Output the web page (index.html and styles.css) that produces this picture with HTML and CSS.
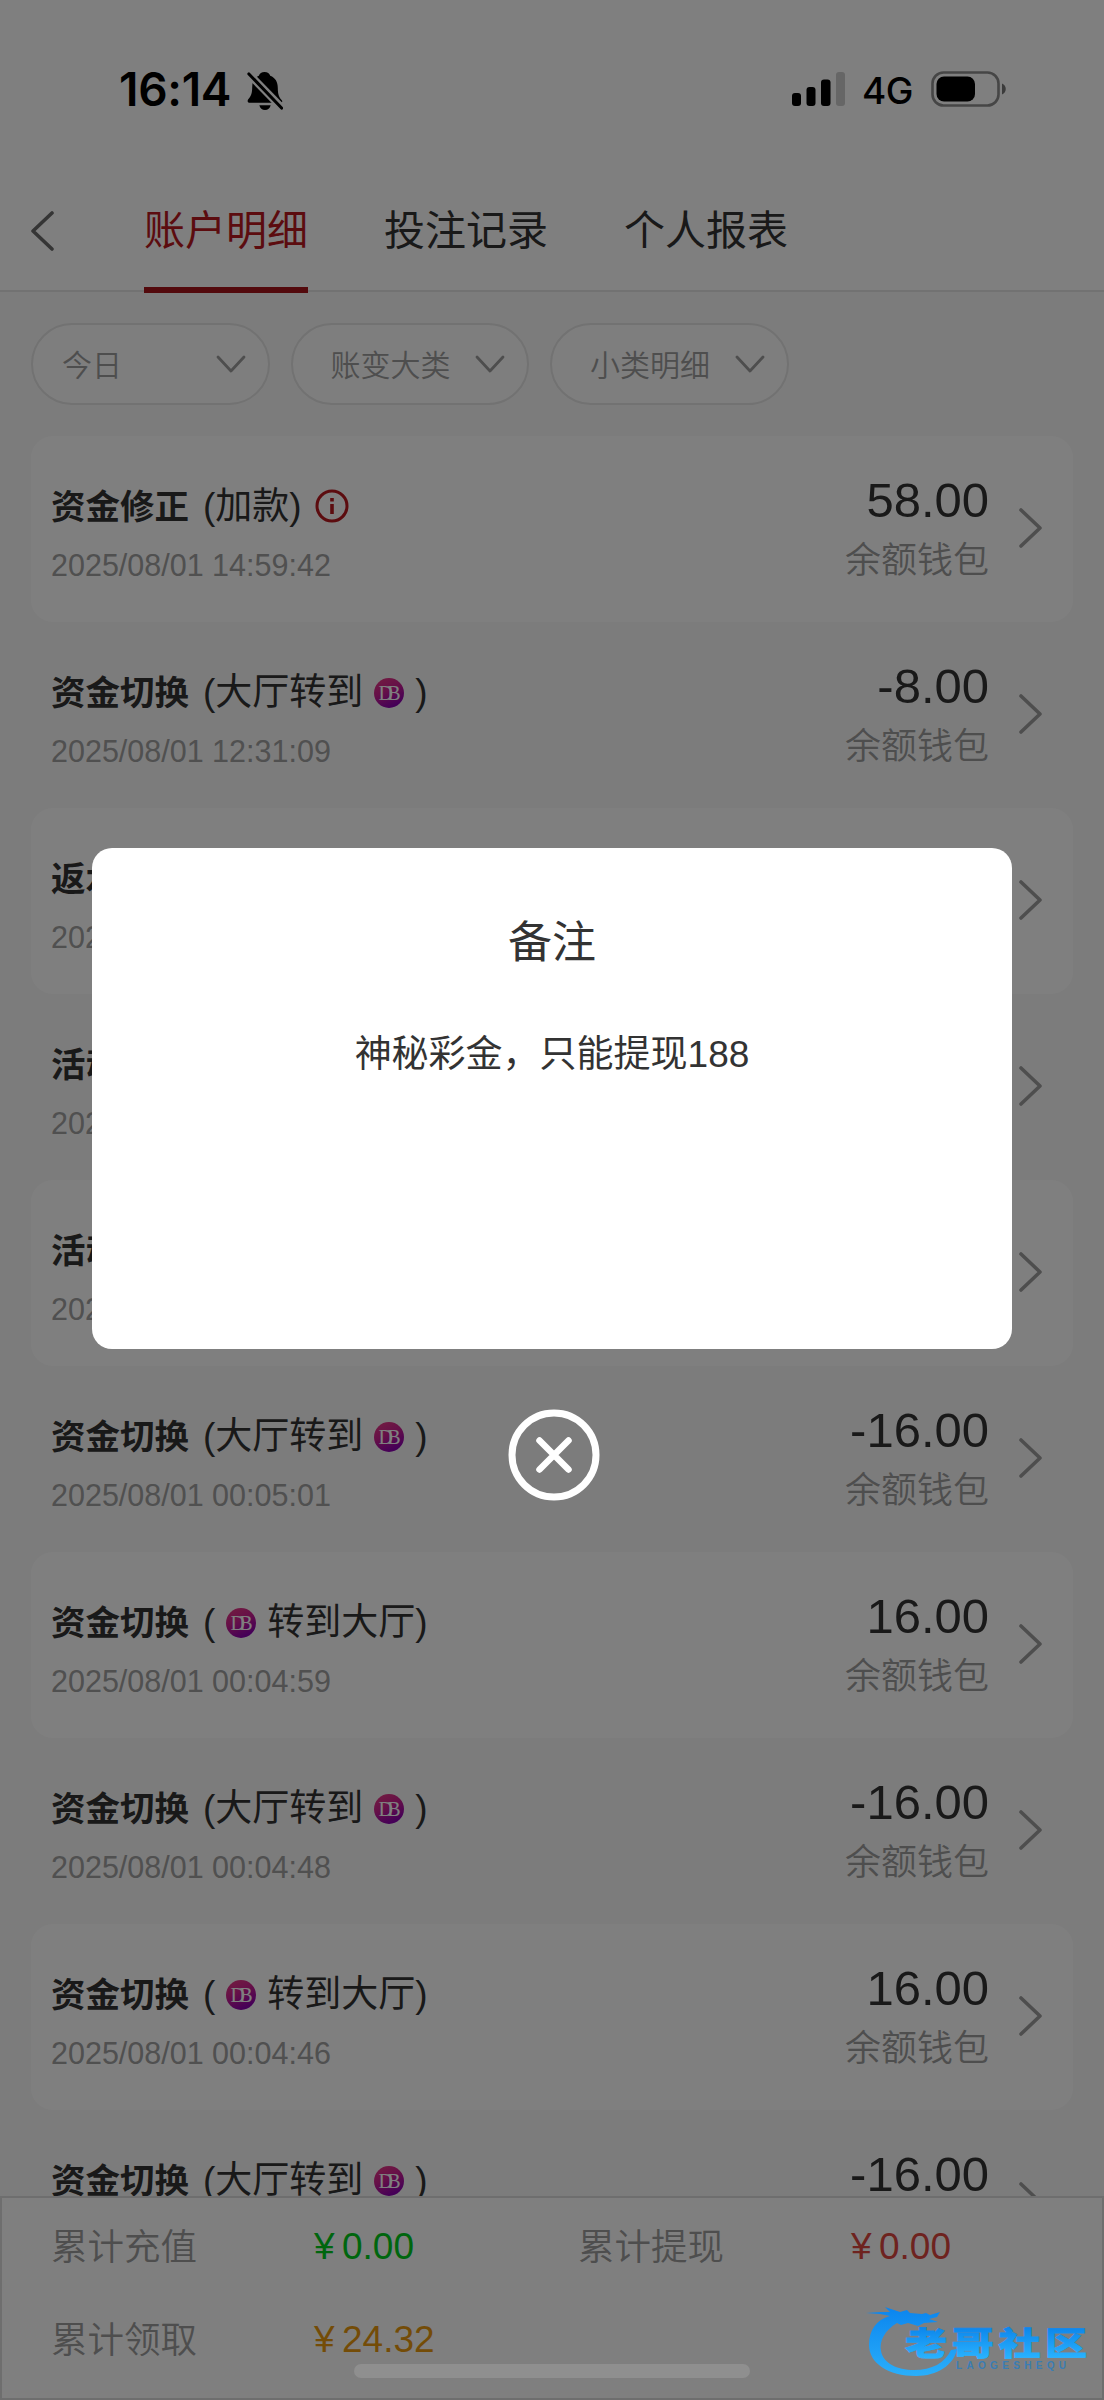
FILE: index.html
```html
<!DOCTYPE html>
<html lang="zh-CN">
<head>
<meta charset="utf-8">
<title>账户明细</title>
<link rel="stylesheet" href="styles.css">
</head>
<body>
<svg class="defs" width="0" height="0" aria-hidden="true">
  <defs>
    <linearGradient id="db-fill" x1="0" y1="0" x2="0.5" y2="1">
      <stop offset="0" stop-color="#e83c80"/><stop offset="0.5" stop-color="#cc2090"/><stop offset="1" stop-color="#8a00b0"/>
    </linearGradient>
    <symbol id="db" viewBox="0 0 30 30">
      <circle cx="15" cy="15" r="15" fill="url(#db-fill)"/>
      <text x="4.5" y="22" font-family="Liberation Serif, serif" font-size="20" fill="#fff" textLength="22" lengthAdjust="spacing">DB</text>
    </symbol>
    <symbol id="next" viewBox="0 0 24 40"><path d="M2 2 21 20 2 38" fill="none" stroke="#9c9c9c" stroke-width="3.6" stroke-linecap="round" stroke-linejoin="round"/></symbol>
    <symbol id="down" viewBox="0 0 30 18"><path d="M2 2 15 16 28 2" fill="none" stroke="#9c9c9c" stroke-width="2.8" stroke-linecap="round" stroke-linejoin="round"/></symbol>
  </defs>
</svg>
<div class="screen">
  <header class="status">
    <span class="clock">16:14</span>
    <svg class="bell" width="36" height="40" viewBox="0 0 38 42">
      <path d="M18.500 1c3.200 0 5.300 1.500 6 4 5.500 2.200 8 6.500 8 12.500 0 7.500 1.500 10 4 13 1.500 2 .5 3-1.500 3H3c-2.500 0-3-2-1.500-4 2.800-3 4-6.500 4-12.500C5.500 11 8 7 12.500 5c.7-2.500 3-4 6-4z"/>
      <path d="M13 36h12c-.7 3.200-3 5-6 5s-5.300-1.800-6-5z"/>
      <path d="M2 3 37 39" stroke="#fff" stroke-width="8"/>
      <path d="M2 3 36.500 39" stroke="#000" stroke-width="3.200" stroke-linecap="round"/>
    </svg>
    <svg class="signal" width="54" height="34" viewBox="0 0 54 34">
      <rect x="0" y="21" width="9" height="13" rx="3"/><rect x="14.500" y="15" width="9" height="19" rx="3"/>
      <rect x="29" y="7.500" width="9.500" height="26.500" rx="3"/><rect x="44" y="0" width="9" height="34" rx="3" fill="#cccccc"/>
    </svg>
    <span class="net">4G</span>
    <svg class="battery" width="76" height="36" viewBox="0 0 76 36">
      <rect x="1.500" y="1.500" width="66" height="33" rx="11" fill="none" stroke="#8d8d8d" stroke-width="2.600"/>
      <rect x="5.500" y="5.500" width="38.500" height="25" rx="7.500"/>
      <path d="M71 12.500c5 2 5 9 0 11z" fill="#777"/>
    </svg>
  </header>

  <nav class="tabs">
    <svg class="back" width="24" height="40" viewBox="0 0 24 40"><path d="M22 2 3 20 22 38" fill="none" stroke="#6a6a6a" stroke-width="3.600" stroke-linecap="round" stroke-linejoin="round"/></svg>
    <span class="tab tab-active">账户明细</span>
    <span class="tab">投注记录</span>
    <span class="tab">个人报表</span>
  </nav>

  <div class="filters">
    <div class="pill pill-first"><span>今日</span><svg width="30" height="18"><use href="#down"/></svg></div>
    <div class="pill"><span>账变大类</span><svg width="30" height="18"><use href="#down"/></svg></div>
    <div class="pill"><span>小类明细</span><svg width="30" height="18"><use href="#down"/></svg></div>
  </div>

  <main class="list">
    <section class="row">
      <div class="info"><div class="title"><b>资金修正</b><span class="kind">(加款)</span>
        <svg class="tip" width="34" height="34" viewBox="0 0 34 34"><circle cx="17" cy="17" r="15" fill="none" stroke="#b8191f" stroke-width="3"/><path d="M17 9v3.500M17 15v10" stroke="#b8191f" stroke-width="3.600"/></svg></div>
        <div class="date">2025/08/01 14:59:42</div></div>
      <div class="sum"><div class="amount">58.00</div><div class="wallet">余额钱包</div></div>
      <svg class="next" width="24" height="40"><use href="#next"/></svg>
    </section>
    <section class="row">
      <div class="info"><div class="title"><b>资金切换</b><span class="kind">(大厅转到</span><svg class="db" width="30" height="30"><use href="#db"/></svg><span>)</span></div>
        <div class="date">2025/08/01 12:31:09</div></div>
      <div class="sum"><div class="amount">-8.00</div><div class="wallet">余额钱包</div></div>
      <svg class="next" width="24" height="40"><use href="#next"/></svg>
    </section>
    <section class="row">
      <div class="info"><div class="title"><b>返水</b></div><div class="date">2025</div></div>
      <svg class="next" width="24" height="40"><use href="#next"/></svg>
    </section>
    <section class="row">
      <div class="info"><div class="title"><b>活动</b></div><div class="date">2025</div></div>
      <svg class="next" width="24" height="40"><use href="#next"/></svg>
    </section>
    <section class="row">
      <div class="info"><div class="title"><b>活动</b></div><div class="date">2025</div></div>
      <svg class="next" width="24" height="40"><use href="#next"/></svg>
    </section>
    <section class="row">
      <div class="info"><div class="title"><b>资金切换</b><span class="kind">(大厅转到</span><svg class="db" width="30" height="30"><use href="#db"/></svg><span>)</span></div>
        <div class="date">2025/08/01 00:05:01</div></div>
      <div class="sum"><div class="amount">-16.00</div><div class="wallet">余额钱包</div></div>
      <svg class="next" width="24" height="40"><use href="#next"/></svg>
    </section>
    <section class="row">
      <div class="info"><div class="title"><b>资金切换</b><span class="kind">(</span><svg class="db" width="30" height="30"><use href="#db"/></svg><span>转到大厅)</span></div>
        <div class="date">2025/08/01 00:04:59</div></div>
      <div class="sum"><div class="amount">16.00</div><div class="wallet">余额钱包</div></div>
      <svg class="next" width="24" height="40"><use href="#next"/></svg>
    </section>
    <section class="row">
      <div class="info"><div class="title"><b>资金切换</b><span class="kind">(大厅转到</span><svg class="db" width="30" height="30"><use href="#db"/></svg><span>)</span></div>
        <div class="date">2025/08/01 00:04:48</div></div>
      <div class="sum"><div class="amount">-16.00</div><div class="wallet">余额钱包</div></div>
      <svg class="next" width="24" height="40"><use href="#next"/></svg>
    </section>
    <section class="row">
      <div class="info"><div class="title"><b>资金切换</b><span class="kind">(</span><svg class="db" width="30" height="30"><use href="#db"/></svg><span>转到大厅)</span></div>
        <div class="date">2025/08/01 00:04:46</div></div>
      <div class="sum"><div class="amount">16.00</div><div class="wallet">余额钱包</div></div>
      <svg class="next" width="24" height="40"><use href="#next"/></svg>
    </section>
    <section class="row">
      <div class="info"><div class="title"><b>资金切换</b><span class="kind">(大厅转到</span><svg class="db" width="30" height="30"><use href="#db"/></svg><span>)</span></div></div>
      <div class="sum"><div class="amount">-16.00</div></div>
      <svg class="next" width="24" height="40"><use href="#next"/></svg>
    </section>
  </main>

  <footer class="totals">
    <span class="label">累计充值</span><span class="value green"><i>¥</i>0.00</span>
    <span class="label">累计提现</span><span class="value red"><i>¥</i>0.00</span>
    <span class="label">累计领取</span><span class="value amber"><i>¥</i>24.32</span>
  </footer>

  <div class="mask"></div>
  <div class="home"></div>
  <div class="dialog">
    <h2>备注</h2>
    <p>神秘彩金，只能提现188</p>
  </div>
  <svg class="close" width="92" height="92" viewBox="0 0 92 92" fill="none" stroke="#fff">
    <circle cx="46" cy="46" r="42" stroke-width="7"/><path d="M31.500 31.500l29 29M60.500 31.500l-29 29" stroke-width="6.500" stroke-linecap="round"/>
  </svg>
  <svg class="brand" width="230" height="76" viewBox="0 0 230 76">
    <defs>
      <linearGradient id="ring" x1="0" y1="0" x2="0" y2="72" gradientUnits="userSpaceOnUse"><stop offset="0" stop-color="#0a84ee"/><stop offset="1" stop-color="#2bb0fb"/></linearGradient>
      <linearGradient id="word" x1="0" y1="0" x2="0" y2="1"><stop offset="0.150" stop-color="#0a82ea"/><stop offset="0.900" stop-color="#2ab4ff"/></linearGradient>
    </defs>
    <path fill="url(#ring)" d="M0 7 15 6 24 6 19 1 34 6 41 4 44 7 56 8 60 7 64 9 74 6 71 11 63 13 72 16 58 17 52 20 42 17 35 19 31 17C19 24 13 35 15 45 17 57 31 64 48 64 66 64 79 57 85 44L91 43C88 59 71 70 50 70 22 70 3 57 3 39 3 24 10 14 24 10L14 8Z"/>
    <text class="brand-name" transform="translate(39 48.500) scale(1 .76)" fill="url(#word)" stroke="url(#word)" stroke-width="1">老哥社区</text>
    <text class="brand-sub" x="90" y="63" textLength="110" fill="#3a7db4">LAOGESHEQU</text>
  </svg>
</div>
</body>
</html>
```
FILE: styles.css
```css
* { box-sizing: border-box; }
body { margin: 0; }
.defs { position: absolute; }
.screen {
  position: relative;
  width: 1104px;
  height: 2400px;
  overflow: hidden;
  display: flex;
  flex-direction: column;
  background: #f9f9f9;
  color: #333;
  font-family: "Liberation Sans", "Noto Sans CJK SC", sans-serif;
}
.status {
  height: 170px;
  flex: none;
  background: #fff;
  display: flex;
  align-items: flex-start;
  padding: 71px 96px 0 119px;
  color: #000;
  font-family: Inter, sans-serif;
}
.clock { width: 119px; font-size: 46px; line-height: 37px; font-weight: 600; letter-spacing: -.3px; white-space: nowrap; }
.bell { margin: 0 0 0 9px; }
.signal { margin: 1px 0 0 auto; }
.net { width: 52px; margin: 1px 17px 0 16px; font-size: 37px; line-height: 38px; font-weight: 500; letter-spacing: -.5px; white-space: nowrap; }
.battery { margin-right: 1px; }

.tabs {
  height: 122px;
  flex: none;
  background: #fff;
  border-bottom: 2px solid #e4e4e4;
  display: flex;
  gap: 76px;
  padding-left: 30px;
}
.back { margin: 41px 14px 0 0; }
.tab {
  height: 123px;
  font-size: 41px;
  line-height: 123px;
  white-space: nowrap;
}
.tab-active { color: #b8191f; border-bottom: 6px solid #a6141a; }

.filters { flex: none; display: flex; gap: 21px; padding: 31px; }
.pill {
  width: 238.500px;
  height: 82px;
  border: 2px solid #e4e4e4;
  border-radius: 41px;
  background: #fdfdfd;
  display: flex;
  align-items: center;
  justify-content: space-between;
  padding: 0 22px 2px 38px;
  font-size: 30px;
  font-weight: 350;
  color: #9c9c9c;
}
.pill svg { margin-top: 2px; }
.pill-first { padding-left: 29px; }

.list { flex: none; padding: 0 31px; }
.row { height: 186px; display: flex; padding: 0 30px 0 20px; border-radius: 22px; }
.row:nth-child(odd) { background: #fff; }
.info { padding-top: 45px; }
.title { height: 52px; display: flex; align-items: center; font-size: 37px; line-height: 52px; white-space: nowrap; }
.title b { font-size: 34.500px; font-weight: 700; }
.kind { margin-left: 14px; }
.tip { margin: -3px 0 0 13px; }
.db { margin: 0 11px; }
.date { margin-top: 14px; font-size: 30.500px; line-height: 36px; color: #a0a0a0; }
.sum { margin-left: auto; padding-top: 37px; text-align: right; }
.amount { font-size: 49px; line-height: 54px; }
.wallet { margin-top: 8px; font-size: 36px; line-height: 52px; font-weight: 350; color: #9c9c9c; }
.next { margin: 72px 0 0 30px; }
.info + .next { margin-left: auto; }

.totals {
  position: absolute;
  inset: 2196px 0 0 0;
  border: 2px solid #dcdcdc;
  background: #fff;
  display: grid;
  grid-template-columns: 263px 264px 273px 1fr;
  grid-template-rows: 93px 93px;
  align-items: center;
  padding: 2px 0 0 49px;
  font-size: 37px;
}
.label { padding-bottom: 4px; font-size: 36.500px; font-weight: 350; color: #9c9c9c; }
.value i { display: inline-block; width: 28px; font-style: normal; }
.green { color: #00cc1c; }
.red { color: #dc463e; }
.amber { color: #e8990f; }

.mask { position: absolute; inset: 0; background: rgba(0, 0, 0, .5); }
.home { position: absolute; left: 354px; top: 2364px; width: 396px; height: 14px; border-radius: 7px; background: #8f8f8f; }
.dialog {
  position: absolute;
  left: 92px;
  top: 848px;
  width: 920px;
  height: 501px;
  border-radius: 20px;
  background: #fff;
  text-align: center;
}
.dialog h2 { margin: 63px 0 0; font-size: 44px; line-height: 64px; font-weight: 400; }
.dialog p { margin: 52px 0 0; font-size: 37px; line-height: 56px; }
.close { position: absolute; left: 508px; top: 1409px; }
.brand { position: absolute; left: 866px; top: 2306px; overflow: visible; }
.brand-name { font: 900 42px "Noto Sans CJK SC", sans-serif; letter-spacing: 4.700px; }
.brand-sub { font: 700 10px "Liberation Sans", sans-serif; }
```
